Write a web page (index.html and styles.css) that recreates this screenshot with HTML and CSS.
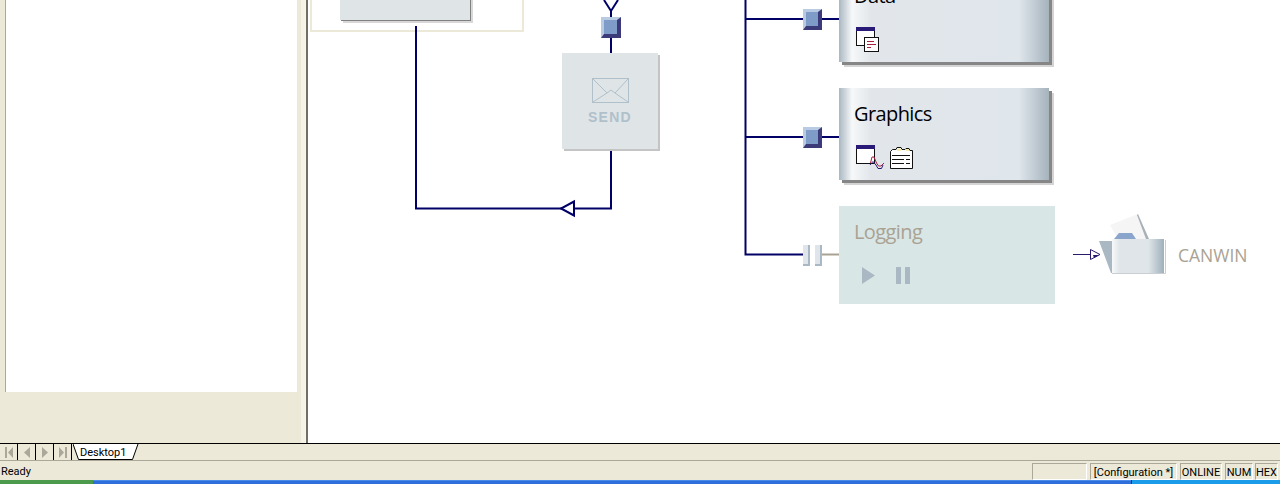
FILE: index.html
```html
<!DOCTYPE html>
<html lang="en">
<head>
    <meta charset="UTF-8">
    <title>Configuration</title>
    <link rel="stylesheet" href="styles.css">
</head>
<body>
    <div class="workspace">
        <div class="side">
            <div class="side-panel"></div>
        </div>
        <div class="splitter"></div>
        <div class="canvas">
            <div class="group-box"></div>
            <div class="top-card"></div>

            <!-- wires -->
            <svg class="wires" width="973" height="443" viewBox="307 0 973 443">
                <g fill="none" stroke="#000066" stroke-width="2">
                    <path d="M416 26V208.500H611V151"/>
                    <path d="M611 10V53"/>
                    <path d="M604 0L611 11L618 0"/>
                    <path d="M745.500 0V254.500H803"/>
                    <path d="M745 19H803M822 19H839"/>
                    <path d="M745 137H803M822 137H839"/>
                    <path d="M574 201.500V215.500L561 208.500Z" fill="#fff"/>
                </g>
                <path d="M822 254.500H839" stroke="#a9a293" stroke-width="2"/>
            </svg>

            <span class="port port-send"></span>
            <div class="send-box">
                <svg width="38" height="26" viewBox="0 0 38 26">
                    <rect x="1.500" y="0.500" width="36" height="24" fill="none" stroke="#b0c0ca"/>
                    <path d="M2 1L16 15L20 12L24 15L37 1M2 24L16 15M37 24L24 15" fill="none" stroke="#b0c0ca"/>
                </svg>
                <span class="send-label">SEND</span>
            </div>

            <span class="port port-data"></span>
            <div class="card card-data">
                <span class="card-title">Data</span>
                <div class="card-icons">
                    <svg width="24" height="26" viewBox="0 0 24 26">
                        <rect x="0.500" y="0.500" width="18" height="18" fill="#fff" stroke="#111"/>
                        <rect x="0" y="0" width="19" height="4" fill="#2a1a78"/>
                        <rect x="8.500" y="10.500" width="14" height="14" fill="#fff" stroke="#111"/>
                        <path d="M11 14.500H18M11 17.500H20M11 20.500H15" stroke="#a82040"/>
                    </svg>
                </div>
            </div>

            <span class="port port-graphics"></span>
            <div class="card card-graphics">
                <span class="card-title">Graphics</span>
                <div class="card-icons">
                    <svg width="29" height="26" viewBox="0 0 29 26">
                        <rect x="0.500" y="0.500" width="18" height="18" fill="#fff" stroke="#111"/>
                        <rect x="0" y="0" width="19" height="4" fill="#2a1a78"/>
                        <path d="M14.500 18L16 12H18L20.500 18L22.500 21H25L28 18" fill="none" stroke="#a82040"/>
                        <path d="M14 20L17 16.500L20 20L22 23.500H25.500L27 20" fill="none" stroke="#2a1a78"/>
                    </svg>
                    <svg width="24" height="22" viewBox="0 0 24 22">
                        <path d="M0.500 21.500V4.500L2.500 2.500H6L7 0.500H11L12 2.500H15L16 1.500H19L20 3.500H22.500V21.500Z" fill="#fff" stroke="#111"/>
                        <path d="M7 1.500H11V4H7ZM16 2H19V4H16Z" fill="#f6eeb0"/>
                        <path d="M2 8.500H20M2 12.500H14M16 12.500H20M2 16.500H14M16 16.500H20" stroke="#111"/>
                    </svg>
                </div>
            </div>

            <span class="port-off port-off-a"></span>
            <span class="port-off port-off-b"></span>
            <div class="card-off">
                <span class="card-title">Logging</span>
                <div class="card-off-icons">
                    <svg width="13" height="17" viewBox="0 0 13 17"><path d="M0 0L13 8.500L0 17Z" fill="#a9b8c2"/></svg>
                    <svg width="15" height="17" viewBox="0 0 15 17"><path d="M0 0H5V17H0ZM9 0H14V17H9Z" fill="#a9b8c2"/></svg>
                </div>
            </div>

            <svg class="folder" width="100" height="64" viewBox="1072 212 100 64">
                <defs>
                    <linearGradient id="folderFront" x1="0" y1="0" x2="1" y2="0">
                        <stop offset="0" stop-color="#f8f9fa"/>
                        <stop offset="0.150" stop-color="#dfe5e8"/>
                        <stop offset="0.700" stop-color="#dfe5e8"/>
                        <stop offset="1" stop-color="#9fb0bc"/>
                    </linearGradient>
                </defs>
                <path d="M1073 254.500H1091" stroke="#2a1a6e"/>
                <path d="M1090.500 249.500V259.500L1100 254.500Z" fill="#fff" stroke="#2a1a6e"/>
                <path d="M1093 255H1099L1094 258Z" fill="#2a1a6e"/>
                <path d="M1099 241H1112V273H1111Z" fill="#a9b8c2"/>
                <path d="M1110 225L1138 214L1148 239H1118Z" fill="#f5f5f5"/>
                <path d="M1138 214L1149 239H1146L1137 215Z" fill="#a8b0b8"/>
                <path d="M1114 239L1119 233H1132L1136 239Z" fill="#8aa5cc"/>
                <rect x="1112" y="239" width="52" height="34" fill="url(#folderFront)"/>
                <path d="M1112 273.500H1165.500V240" fill="none" stroke="#c8ced2"/>
            </svg>
            <span class="folder-label">CANWIN</span>
        </div>
    </div>

    <div class="tabbar">
        <div class="tab-btn"><svg width="10" height="11" viewBox="0 0 10 11"><path d="M1 0H3V11H1ZM9 0V11L4 5.500Z" fill="#aca899"/></svg></div>
        <div class="tab-btn"><svg width="10" height="11" viewBox="0 0 10 11"><path d="M8 0V11L2 5.500Z" fill="#aca899"/></svg></div>
        <div class="tab-btn"><svg width="10" height="11" viewBox="0 0 10 11"><path d="M2 0V11L8 5.500Z" fill="#aca899"/></svg></div>
        <div class="tab-btn"><svg width="10" height="11" viewBox="0 0 10 11"><path d="M1 0V11L6 5.500ZM7 0H9V11H7Z" fill="#aca899"/></svg></div>
        <div class="tab">
            <svg class="tab-shape" width="66" height="16" viewBox="0 0 66 16">
                <path d="M0 0L5.500 15.500H59.500L65 0" fill="#fff" stroke="#000"/>
            </svg>
            <span class="tab-text">Desktop1</span>
        </div>
    </div>

    <div class="statusbar">
        <span class="status-text">Ready</span>
        <span class="pane pane-blank"></span>
        <span class="pane pane-config">[Configuration *]</span>
        <span class="pane pane-online">ONLINE</span>
        <span class="pane pane-num">NUM</span>
        <span class="pane pane-hex">HEX</span>
    </div>

    <div class="taskbar">
        <div class="start"></div>
        <div class="task-strip"></div>
        <div class="tray"></div>
    </div>
</body>
</html>
```

FILE: styles.css
```css
body {
    margin: 0;
    width: 1280px;
    height: 484px;
    overflow: hidden;
    display: flex;
    flex-direction: column;
    background-color: #ece9d8;
    font-family: Roboto, "Open Sans", sans-serif;
    font-size: 11px;
    color: #000;
}
.workspace {
    height: 443px;
    display: flex;
    flex-shrink: 0;
}
.side {
    width: 297px;
    padding-left: 5px;
    box-sizing: border-box;
}
.side-panel {
    height: 392px;
    background-color: #fff;
    border-left: 1px solid #aca899;
    box-sizing: border-box;
}
.splitter {
    width: 9px;
    background-color: #ece9d8;
    border-right: 1px solid #f7f5ec;
    box-sizing: border-box;
    box-shadow: inset -4px 0 0 #f5f3e8;
}
.canvas {
    position: relative;
    flex: 1;
    background-color: #fff;
    border-left: 2px solid #716f64;
    overflow: hidden;
    box-sizing: border-box;
}

/* diagram nodes, left = screen x - 308 */
.wires {
    position: absolute;
    left: -1px;
    top: 0;
}
.group-box {
    position: absolute;
    left: 2px;
    top: -20px;
    width: 210px;
    height: 48px;
    border: 2px solid #ece9d8;
}
.top-card {
    position: absolute;
    left: 32px;
    top: -20px;
    width: 130px;
    height: 40px;
    background-color: #dfe4e7;
    box-shadow: 1px 1px 0 #808080, 3px 3px 0 #d8d8d8;
}
.port,
.port-off {
    position: absolute;
    box-sizing: border-box;
}
.port {
    width: 19px;
    height: 21px;
    background-color: #7f9bc8;
    border-style: solid;
    border-width: 3px 4px 4px 3px;
    border-color: #b8cbe3 #3c3a78 #3c3a78 #b8cbe3;
}
.port-send {
    left: 293px;
    top: 17px;
    width: 20px;
}
.port-data {
    left: 495px;
    top: 9px;
}
.port-graphics {
    left: 495px;
    top: 127px;
}
.port-off {
    top: 245px;
    width: 7px;
    height: 21px;
    background-color: #dfe5ea;
    border-right: 2px solid #a9b8c2;
    border-bottom: 2px solid #a9b8c2;
}
.port-off-a {
    left: 495px;
}
.port-off-b {
    left: 507px;
}
.send-box {
    position: absolute;
    left: 254px;
    top: 53px;
    width: 96px;
    height: 96px;
    background-color: #dfe4e7;
    box-shadow: 2px 2px 0 #c4c4c4;
    display: flex;
    flex-direction: column;
    align-items: center;
    padding-top: 25px;
    box-sizing: border-box;
}
.send-label {
    font-family: "Liberation Sans", Arial, sans-serif;
    font-size: 14px;
    font-weight: bold;
    letter-spacing: 1.300px;
    color: #b0c0ca;
    margin-top: 5px;
    line-height: 16px;
}
.card {
    position: absolute;
    left: 531px;
    width: 210px;
    height: 92px;
    box-sizing: border-box;
    padding: 13px 0 0 15px;
    background: linear-gradient(to right, #a9b7c1 0, #f6f8f9 13px, #e2e6ea 32px, #dfe6ec 180px, #a5b3bd 210px);
    box-shadow: 3px 3px 0 #868686, 5px 5px 0 #d4d4d4;
}
.card-data {
    top: -30px;
}
.card-graphics {
    top: 88px;
}
.card-title {
    display: block;
    font-family: "Open Sans", sans-serif;
    font-size: 20px;
    letter-spacing: -0.600px;
    line-height: 26px;
}
.card-icons {
    display: flex;
    align-items: flex-start;
    gap: 5px;
    margin: 18px 0 0 2px;
    height: 26px;
}
.card-graphics .card-icons svg + svg {
    margin-top: 2px;
}
.card-off {
    position: absolute;
    left: 531px;
    top: 206px;
    width: 216px;
    height: 98px;
    box-sizing: border-box;
    padding: 13px 0 0 15px;
    background-color: #d9e6e6;
    color: #a9a293;
}
.card-off-icons {
    display: flex;
    gap: 21px;
    margin: 22px 0 0 8px;
}
.folder {
    position: absolute;
    left: 764px;
    top: 212px;
}
.folder-label {
    position: absolute;
    left: 870px;
    top: 244px;
    font-family: "Open Sans", sans-serif;
    font-size: 17.500px;
    line-height: 22px;
    color: #a9a293;
}

/* sheet tabs */
.tabbar {
    height: 16px;
    flex-shrink: 0;
    border-top: 1px solid #000;
    border-bottom: 1px solid #aca899;
    display: flex;
    align-items: stretch;
}
.tab-btn {
    width: 17px;
    border-right: 1px solid #000;
    display: flex;
    align-items: center;
    justify-content: center;
}
.tab {
    position: relative;
    width: 66px;
    margin-left: 1px;
}
.tab-shape {
    position: absolute;
    left: 0;
    top: 0;
}
.tab-text {
    position: absolute;
    left: 7px;
    top: 1px;
    line-height: 16px;
}

/* status bar */
.statusbar {
    height: 19px;
    flex-shrink: 0;
    display: flex;
    align-items: flex-end;
    gap: 3px;
    padding-right: 2px;
    box-sizing: border-box;
}
.status-text {
    flex: 1;
    align-self: flex-start;
    padding: 3px 0 0 1px;
    line-height: 16px;
}
.pane {
    height: 17px;
    line-height: 17px;
    box-sizing: border-box;
    border: 1px solid;
    border-color: #aca899 #fff #fff #aca899;
    text-align: center;
    white-space: nowrap;
}
.pane-blank {
    width: 55px;
}
.pane-config {
    width: 87px;
}
.pane-online {
    width: 42px;
}
.pane-num {
    width: 28px;
}
.pane-hex {
    width: 23px;
    margin-left: -1px;
}

/* taskbar sliver */
.taskbar {
    height: 4px;
    flex-shrink: 0;
    display: flex;
}
.start {
    width: 93px;
    background-color: #4c9a4c;
}
.task-strip {
    flex: 1;
    background-color: #2f6fdc;
    border-top: 1px solid #4a8ae8;
}
.tray {
    width: 148px;
    background-color: #1b9ce8;
    border-left: 1px solid #123a80;
}
```
